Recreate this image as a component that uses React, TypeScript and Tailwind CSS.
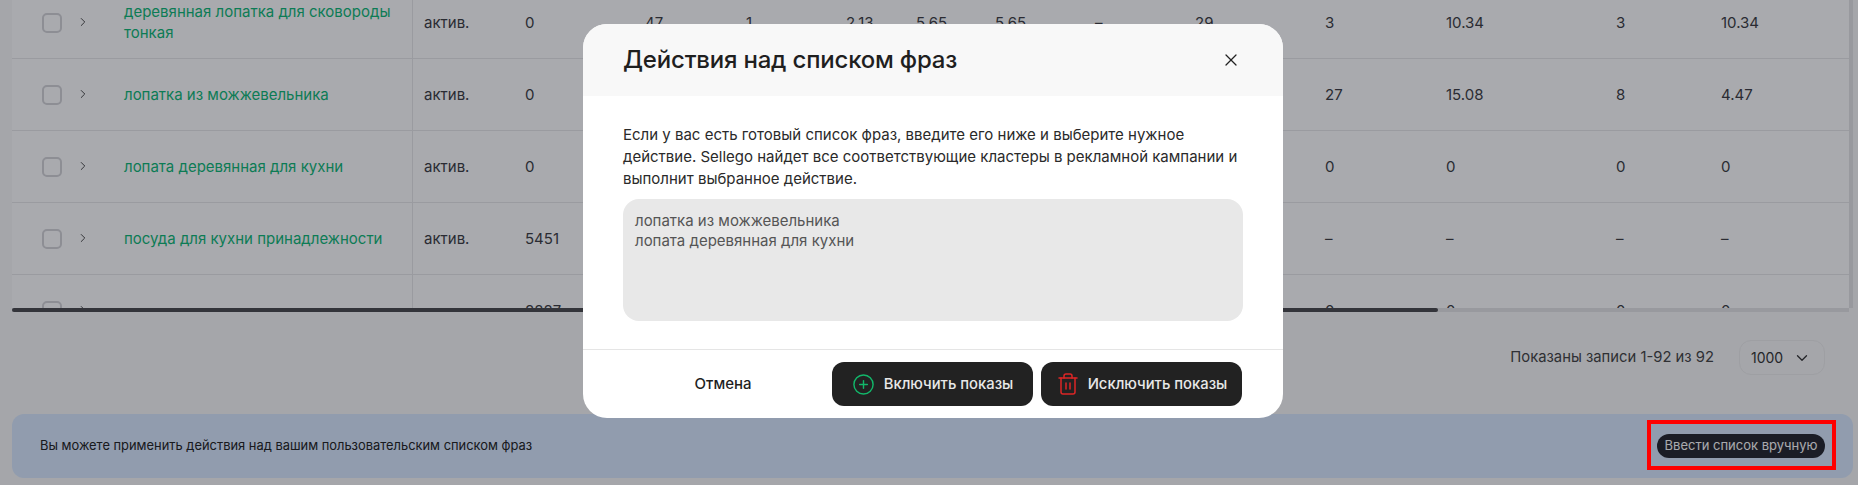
import { ChevronDown, ChevronRight, CirclePlus, Trash2, X } from "lucide-react"

interface Row {
  name: string[]
  status: string
  values: string[]
}

const rows: Row[] = [
  {
    name: ["деревянная лопатка для сковороды", "тонкая"],
    status: "актив.",
    values: ["0", "47", "1", "2.13", "5.65", "5.65", "–", "29", "3", "10.34", "3", "10.34"],
  },
  {
    name: ["лопатка из можжевельника"],
    status: "актив.",
    values: ["0", "", "", "", "", "", "", "", "27", "15.08", "8", "4.47"],
  },
  {
    name: ["лопата деревянная для кухни"],
    status: "актив.",
    values: ["0", "", "", "", "", "", "", "", "0", "0", "0", "0"],
  },
  {
    name: ["посуда для кухни принадлежности"],
    status: "актив.",
    values: ["5451", "", "", "", "", "", "", "", "–", "–", "–", "–"],
  },
  {
    name: [],
    status: "",
    values: ["8887", "", "", "", "", "", "", "", "0", "0", "0", "0"],
  },
]

function TableRow({ row }: { row: Row }) {
  return (
    <div className="grid h-[72px] grid-cols-[401px_100px_120px_101px_100px_70px_79px_100px_100px_130px_121px_170px_105px_1fr] items-center border-b border-[#e9e9ea]">
      <div className="flex h-full items-center border-r border-[#e9e9ea] pl-[30px]">
        <div className="h-5 w-5 shrink-0 rounded-[5px] border-2 border-[#d4d4d8] bg-white" />
        <ChevronRight className="mb-[2px] ml-[14px] h-[14px] w-[14px] shrink-0 text-[#333]" strokeWidth={1.5} />
        <div className="mb-[1px] ml-[34px] text-[15px] leading-[21px] text-[#0fb877]">
          {row.name.map((line) => (
            <div key={line}>{line}</div>
          ))}
        </div>
      </div>
      <div className="pl-[11px] pt-[1px] text-[15px] text-[#3c3d42]">{row.status}</div>
      {row.values.map((value, i) => (
        <div key={i} className="pl-3 pt-[1px] text-[15px] text-[#3c3d42]">
          {value}
        </div>
      ))}
    </div>
  )
}

function PhrasesModal() {
  return (
    <div className="absolute left-[583px] top-[24px] flex h-[394px] w-[700px] flex-col overflow-hidden rounded-3xl bg-white">
      <div className="flex h-[72px] shrink-0 items-center justify-between bg-[#f8f8f8] pl-10 pr-[42px]">
        <h2 className="text-[24px] font-medium tracking-[-0.2px] text-[#1f1f1f]">Действия над списком фраз</h2>
        <X className="h-5 w-5 text-[#222]" strokeWidth={1.5} />
      </div>
      <div className="flex-1 px-10 pt-[28px]">
        <p className="text-[15px] leading-[22px] text-[#2a2a2a]">
          Если у вас есть готовый список фраз, введите его ниже и выберите нужное действие. Sellego найдет все
          соответствующие кластеры в рекламной кампании и выполнит выбранное действие.
        </p>
        <textarea
          readOnly
          className="mt-[9px] h-[122px] w-full resize-none rounded-2xl bg-[#e8e8e8] px-3 pt-3 text-[15px] leading-[20px] text-[#555]"
          defaultValue={"лопатка из можжевельника\nлопата деревянная для кухни"}
        />
      </div>
      <div className="flex h-[69px] shrink-0 border-t border-[#e5e5e5] pl-10 pr-[41px] pt-3">
        <button className="mr-[9px] h-11 w-[200px] text-[15px] font-medium text-[#1f1f1f]">Отмена</button>
        <button className="flex h-11 w-[201px] items-center justify-center gap-[9px] rounded-xl bg-[#222] text-[14.8px] font-medium text-[#e8e8e8]">
          <CirclePlus className="h-[23px] w-[23px] text-[#12b76a]" strokeWidth={1.5} />
          Включить показы
        </button>
        <button className="ml-2 flex h-11 w-[201px] items-center justify-center gap-[8px] rounded-xl bg-[#222] text-[14.8px] font-medium text-[#e8e8e8]">
          <Trash2 className="h-6 w-6 text-[#dc2626]" strokeWidth={1.5} />
          Исключить показы
        </button>
      </div>
    </div>
  )
}

export default function App() {
  return (
    <div className="relative flex h-[485px] w-full flex-col overflow-hidden bg-[#f9f9f9] pl-3 pr-[5px] font-['Inter',sans-serif]">
      <div className="flex h-[312px] shrink-0">
        <div className="flex min-w-0 flex-1 flex-col">
          <div className="h-[308px] overflow-hidden bg-white">
            <div className="-mt-[13px]">
              {rows.map((row, i) => (
                <TableRow key={i} row={row} />
              ))}
            </div>
          </div>
          <div className="h-1 bg-[#e5e5e6]">
            <div className="h-1 w-[1426px] rounded-full bg-[#4a4a4d]" />
          </div>
        </div>
        <div className="h-[308px] w-1 bg-[#e5e5e6]" />
      </div>

      <div className="mt-[28px] flex items-center justify-end gap-[25px] pr-7">
        <span className="text-[14.8px] text-[#444]">Показаны записи 1-92 из 92</span>
        <div className="flex h-[35px] w-[86px] items-center justify-between rounded-xl border border-[#eee] pl-[11px] pr-[13px] text-[14px] text-[#333]">
          1000
          <ChevronDown className="h-[18px] w-[18px] text-[#333]" strokeWidth={1.75} />
        </div>
      </div>

      <div className="mt-[39px] flex h-[64px] items-center justify-between rounded-xl bg-[#daeaff] pl-7 pr-7">
        <span className="text-[12.9px] text-[#222]">Вы можете применить действия над вашим пользовательским списком фраз</span>
        <button className="h-6 w-[168px] rounded-full bg-[#26272f] text-[13px] text-white">Ввести список вручную</button>
      </div>

      {/* затемнение под модалкой */}
      <div className="absolute inset-0 bg-[rgba(9,12,24,0.35)]" />
      <PhrasesModal />
      <div className="absolute left-[1647px] top-[420px] h-[50px] w-[189px] border-4 border-[#ff0000]" />
    </div>
  )
}
